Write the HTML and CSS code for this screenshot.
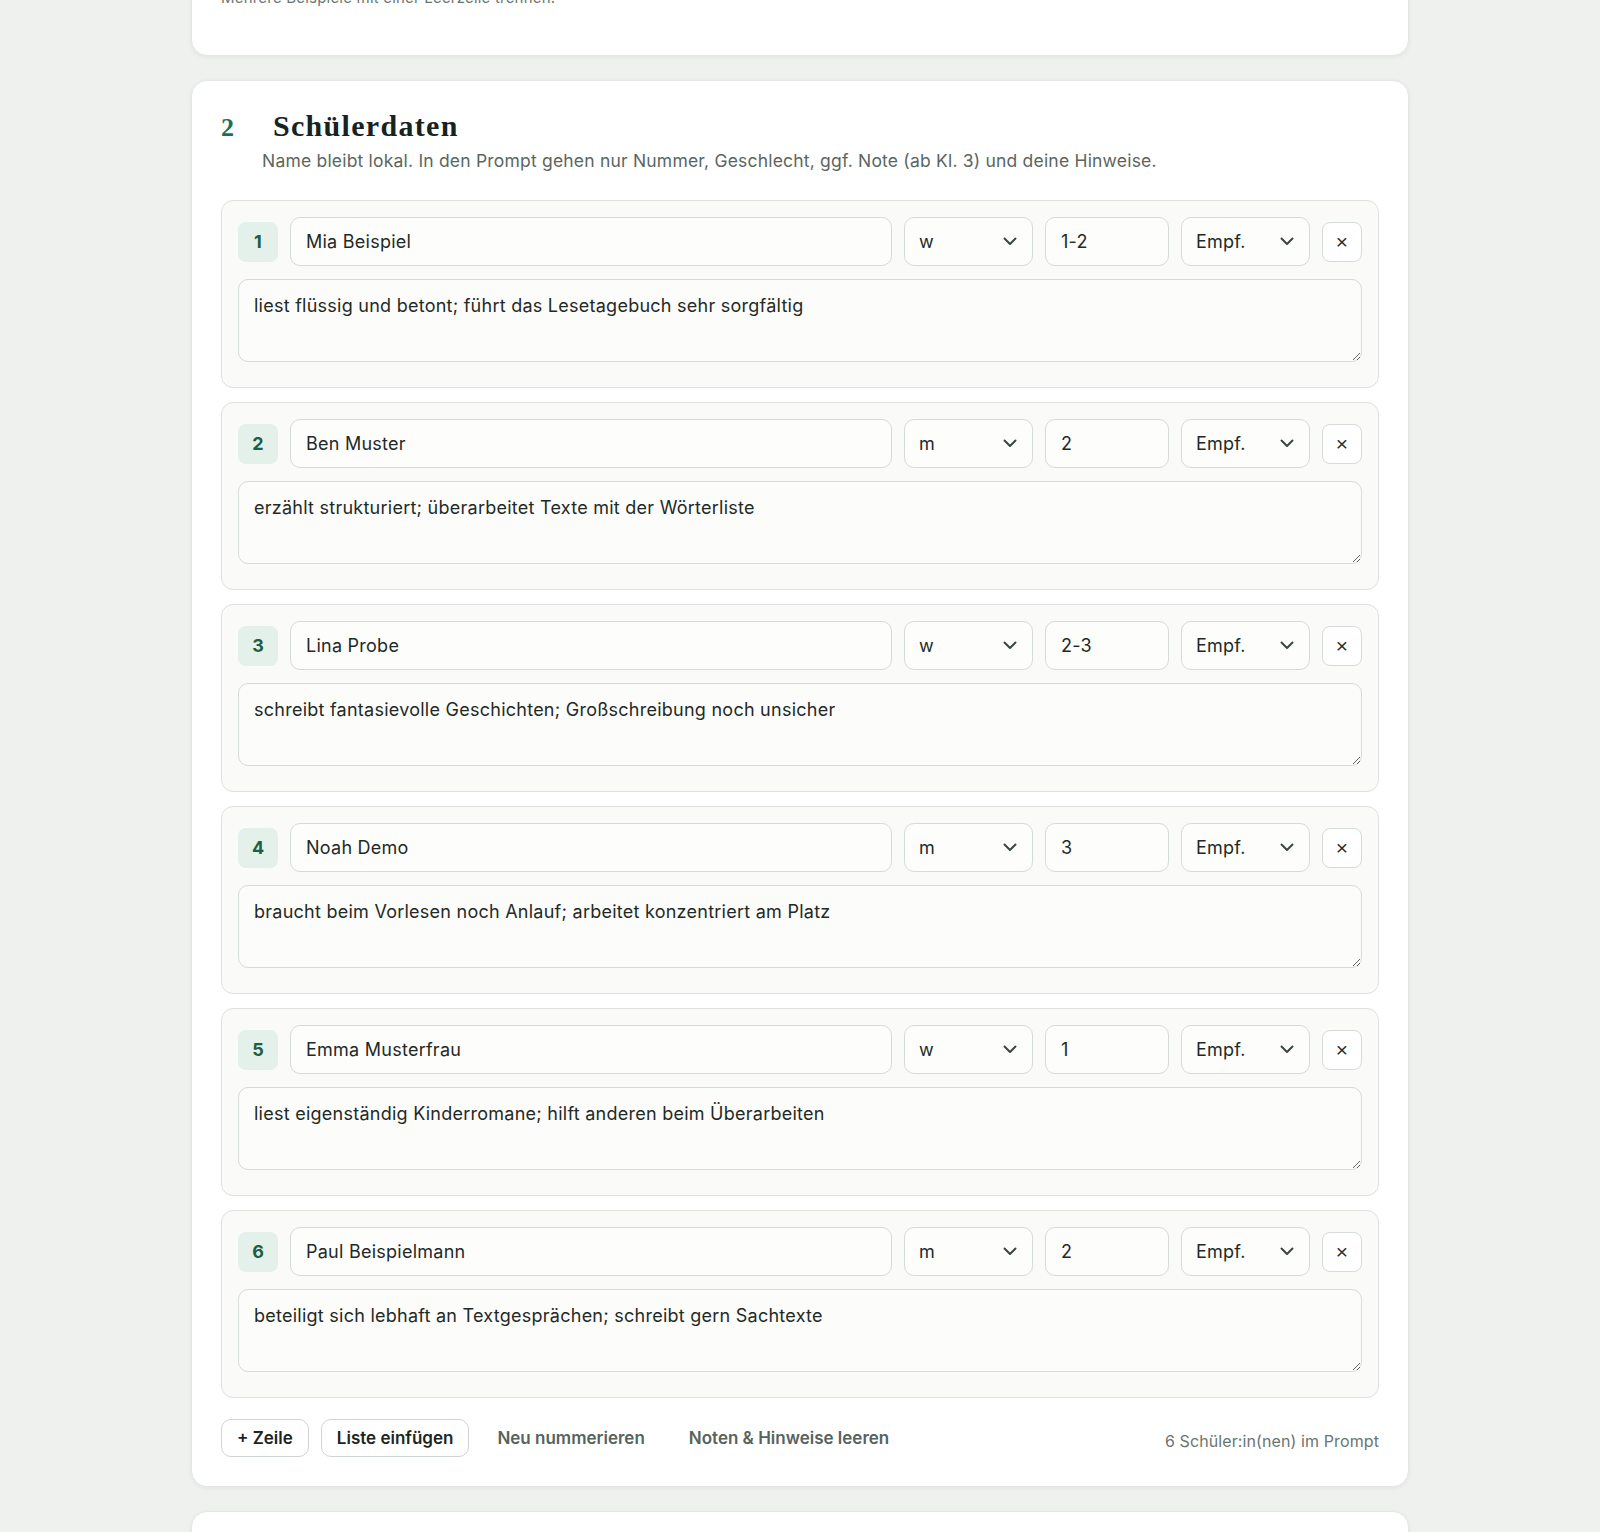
FILE: index.html
```html
<!DOCTYPE html>
<html lang="de">
<head>
    <meta charset="UTF-8" />
    <meta name="viewport" content="width=device-width, initial-scale=1.0" />
    <title>Zeugnis-Prompt – Schülerdaten</title>
    <link rel="stylesheet" href="styles.css">
</head>
<body>
    <main class="page">
        <section class="card card-prev">
            <p class="hint">Mehrere Beispiele mit einer Leerzeile trennen.</p>
        </section>

        <section class="card">
            <header class="card-head">
                <h2><span class="step">2</span>Schülerdaten</h2>
                <p class="lead">Name bleibt lokal. In den Prompt gehen nur Nummer, Geschlecht, ggf. Note (ab Kl. 3) und deine Hinweise.</p>
            </header>

            <div class="students">
                <div class="student">
                    <div class="student-top">
                        <span class="num">1</span>
                        <input class="field" type="text" value="Mia Beispiel" />
                        <select class="field select"><option selected>w</option><option>m</option><option>d</option></select>
                        <input class="field" type="text" value="1-2" />
                        <select class="field select"><option selected>Empf.</option><option>keine</option></select>
                        <button class="remove" title="Entfernen">×</button>
                    </div>
                    <textarea class="notes">liest flüssig und betont; führt das Lesetagebuch sehr sorgfältig</textarea>
                </div>
                <div class="student">
                    <div class="student-top">
                        <span class="num">2</span>
                        <input class="field" type="text" value="Ben Muster" />
                        <select class="field select"><option>w</option><option selected>m</option><option>d</option></select>
                        <input class="field" type="text" value="2" />
                        <select class="field select"><option selected>Empf.</option><option>keine</option></select>
                        <button class="remove" title="Entfernen">×</button>
                    </div>
                    <textarea class="notes">erzählt strukturiert; überarbeitet Texte mit der Wörterliste</textarea>
                </div>
                <div class="student">
                    <div class="student-top">
                        <span class="num">3</span>
                        <input class="field" type="text" value="Lina Probe" />
                        <select class="field select"><option selected>w</option><option>m</option><option>d</option></select>
                        <input class="field" type="text" value="2-3" />
                        <select class="field select"><option selected>Empf.</option><option>keine</option></select>
                        <button class="remove" title="Entfernen">×</button>
                    </div>
                    <textarea class="notes">schreibt fantasievolle Geschichten; Großschreibung noch unsicher</textarea>
                </div>
                <div class="student">
                    <div class="student-top">
                        <span class="num">4</span>
                        <input class="field" type="text" value="Noah Demo" />
                        <select class="field select"><option>w</option><option selected>m</option><option>d</option></select>
                        <input class="field" type="text" value="3" />
                        <select class="field select"><option selected>Empf.</option><option>keine</option></select>
                        <button class="remove" title="Entfernen">×</button>
                    </div>
                    <textarea class="notes">braucht beim Vorlesen noch Anlauf; arbeitet konzentriert am Platz</textarea>
                </div>
                <div class="student">
                    <div class="student-top">
                        <span class="num">5</span>
                        <input class="field" type="text" value="Emma Musterfrau" />
                        <select class="field select"><option selected>w</option><option>m</option><option>d</option></select>
                        <input class="field" type="text" value="1" />
                        <select class="field select"><option selected>Empf.</option><option>keine</option></select>
                        <button class="remove" title="Entfernen">×</button>
                    </div>
                    <textarea class="notes">liest eigenständig Kinderromane; hilft anderen beim Überarbeiten</textarea>
                </div>
                <div class="student">
                    <div class="student-top">
                        <span class="num">6</span>
                        <input class="field" type="text" value="Paul Beispielmann" />
                        <select class="field select"><option>w</option><option selected>m</option><option>d</option></select>
                        <input class="field" type="text" value="2" />
                        <select class="field select"><option selected>Empf.</option><option>keine</option></select>
                        <button class="remove" title="Entfernen">×</button>
                    </div>
                    <textarea class="notes">beteiligt sich lebhaft an Textgesprächen; schreibt gern Sachtexte</textarea>
                </div>
            </div>

            <div class="actions">
                <button class="btn">+ Zeile</button>
                <button class="btn">Liste einfügen</button>
                <button class="btn btn-ghost">Neu nummerieren</button>
                <button class="btn btn-ghost">Noten &amp; Hinweise leeren</button>
                <span class="count">6 Schüler:in(nen) im Prompt</span>
            </div>
        </section>

        <section class="card card-next"></section>
    </main>
</body>
</html>
```

FILE: styles.css
```css
/* Base */
* {
    box-sizing: border-box;
}
body {
    margin: 0;
    background: #eff1ef;
    font-family: Inter, "Liberation Sans", sans-serif;
    color: #1f2a26;
    overflow: hidden;
}

/* Page column with the step cards */
.page {
    width: 1218px;
    margin: 0 auto;
    display: flex;
    flex-direction: column;
    gap: 24px;
}
.card {
    background: #fff;
    border: 1px solid #e3e7e4;
    border-radius: 16px;
    box-shadow: 0 1px 4px rgba(30, 50, 40, 0.07);
    padding: 29px;
}
.card-prev {
    margin-top: -42px;
}
.hint {
    margin: 0 0 18px;
    font-size: 15px;
    line-height: 20px;
    letter-spacing: 0.2px;
    color: #6b7570;
}
.card-next {
    min-height: 120px;
}

/* Card header */
.card-head h2 {
    margin: 0;
    display: flex;
    align-items: baseline;
    font: 700 30px/32px "Liberation Serif", serif;
    letter-spacing: 1.3px;
    color: #17231f;
}
.step {
    width: 52px;
    font-size: 26px;
    letter-spacing: 0;
    color: #1f6f55;
}
.lead {
    margin: 6px 0 0 41px;
    font-size: 17.5px;
    line-height: 22px;
    letter-spacing: 0.2px;
    color: #5b6661;
}

/* Student rows */
.students {
    margin-top: 28px;
    display: flex;
    flex-direction: column;
    gap: 14px;
}
.student {
    background: #fafaf9;
    border: 1px solid #dde2de;
    border-radius: 12px;
    padding: 16px 16px 25px;
}
.student-top {
    display: grid;
    grid-template-columns: 40px 1fr 129px 124px 129px 40px;
    gap: 12px;
    align-items: center;
}
.num {
    height: 40px;
    display: flex;
    justify-content: center;
    align-items: center;
    background: #e4f0ea;
    border-radius: 8px;
    color: #1d5e45;
    font-weight: 700;
    font-size: 18px;
}
.field {
    height: 49px;
    width: 100%;
    border: 1.5px solid #d5dbd7;
    border-radius: 10px;
    background: #fdfdfc;
    padding: 0 15px;
    font: 18px Inter, "Liberation Sans", sans-serif;
    letter-spacing: 0.25px;
    color: #1f2a26;
}
.select {
    appearance: none;
    -webkit-appearance: none;
    padding-left: 14px;
    background-image: url("data:image/svg+xml,%3Csvg xmlns='http://www.w3.org/2000/svg' width='14' height='9' viewBox='0 0 14 9'%3E%3Cpath d='M1.5 1.5l5.5 5.5 5.5-5.5' fill='none' stroke='%233a4640' stroke-width='2' stroke-linecap='round' stroke-linejoin='round'/%3E%3C/svg%3E");
    background-repeat: no-repeat;
    background-position: right 15px center;
}
.remove {
    width: 40px;
    height: 40px;
    border: 1.5px solid #d5dbd7;
    border-radius: 8px;
    background: #fff;
    font-size: 21px;
    color: #25302b;
    padding: 0;
}
.notes {
    display: block;
    width: 100%;
    height: 83px;
    margin-top: 13px;
    border: 1.5px solid #d5dbd7;
    border-radius: 10px;
    background: #fcfcfb;
    padding: 14px 15px;
    font: 18px/24px Inter, "Liberation Sans", sans-serif;
    letter-spacing: 0.25px;
    color: #1f2a26;
    resize: vertical;
}

/* Footer actions */
.actions {
    margin-top: 21px;
    display: flex;
    align-items: center;
    gap: 12px;
}
.btn {
    height: 38px;
    padding: 0 15px;
    border: 1.5px solid #cfd5d1;
    border-radius: 10px;
    background: #fff;
    font: 600 17px Inter, "Liberation Sans", sans-serif;
    color: #1c2522;
}
.btn-ghost {
    background: transparent;
    border-color: transparent;
    color: #57635d;
}
.count {
    margin-left: auto;
    padding-top: 6px;
    font-size: 16px;
    letter-spacing: 0.1px;
    color: #6b7570;
}
```
